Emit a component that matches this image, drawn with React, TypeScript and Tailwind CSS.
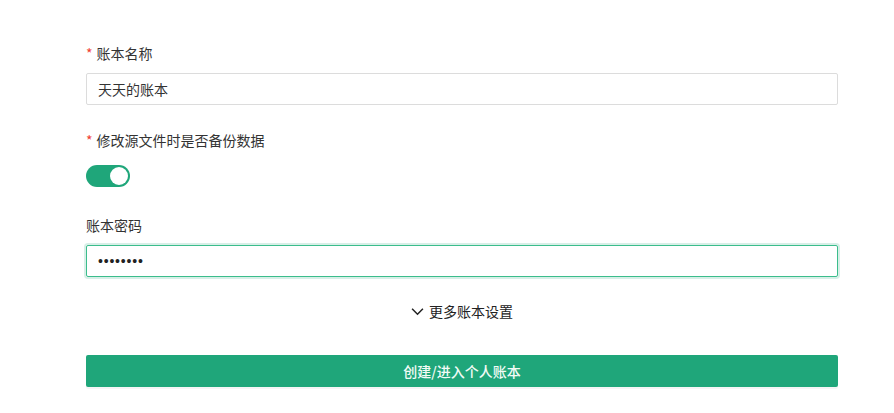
import { useState } from "react";

const font = { fontFamily: '"Noto Sans CJK SC", "Noto Sans", sans-serif' };

function FieldLabel({ text, required }: { text: string; required?: boolean }) {
  return (
    <div className="flex h-[22px] items-center text-[14px] leading-[22px] text-[#333]">
      {required ? <span className="mr-[4px] text-[#f04134]">*</span> : null}
      {text}
    </div>
  );
}

function Toggle({ on, onChange }: { on: boolean; onChange: (v: boolean) => void }) {
  return (
    <button
      type="button"
      onClick={() => onChange(!on)}
      className={`relative flex h-[22px] w-[44px] items-center rounded-full px-[2px] transition ${on ? "justify-end bg-[#1fa67a]" : "justify-start bg-[#c0c4cc]"}`}
    >
      <span className="h-[18px] w-[18px] rounded-full bg-white" />
    </button>
  );
}

export default function App() {
  const [name, setName] = useState("天天的账本");
  const [backup, setBackup] = useState(true);
  const [password, setPassword] = useState("12345678");

  return (
    <div className="min-h-[413px] bg-white pt-[42px]" style={font}>
      <div className="ml-[86px] w-[752px]">
        <FieldLabel text="账本名称" required />
        <input
          value={name}
          onChange={(e) => setName(e.target.value)}
          className="mt-[9px] h-[32px] w-full rounded-[2px] border border-[#dcdcdc] px-[11px] text-[14px] text-[#333] outline-none"
        />

        <div className="mt-[24px]">
          <FieldLabel text="修改源文件时是否备份数据" required />
        </div>
        <div className="mt-[14px] flex">
          <Toggle on={backup} onChange={setBackup} />
        </div>

        <div className="mt-[27px]">
          <FieldLabel text="账本密码" />
        </div>
        <input
          type="password"
          value={password}
          autoFocus
          onChange={(e) => setPassword(e.target.value)}
          className="mt-[9px] h-[32px] w-full rounded-[2px] border border-[#3bbd8c] px-[11px] font-['Liberation_Sans',sans-serif] text-[14px] tracking-[0.8px] text-[#222] caret-[#111] shadow-[0_0_0_2px_rgba(31,166,122,0.18)] outline-none"
        />

        <button type="button" className="mx-auto mt-[23px] flex h-[22px] items-center gap-[5px] text-[14px] text-[#222]">
          <svg width="13" height="13" viewBox="0 0 12 12" fill="none" stroke="#222" strokeWidth="1.4">
            <path d="M1 3.5 6 8.5 11 3.5" />
          </svg>
          更多账本设置
        </button>

        <button
          type="button"
          className="mt-[33px] h-[32px] w-full rounded-[2px] bg-[#1fa67a] text-[14px] font-medium text-[#f2fbf6] shadow-[0_2px_0_rgba(0,0,0,0.04)]"
        >
          创建/进入个人账本
        </button>
      </div>
    </div>
  );
}
